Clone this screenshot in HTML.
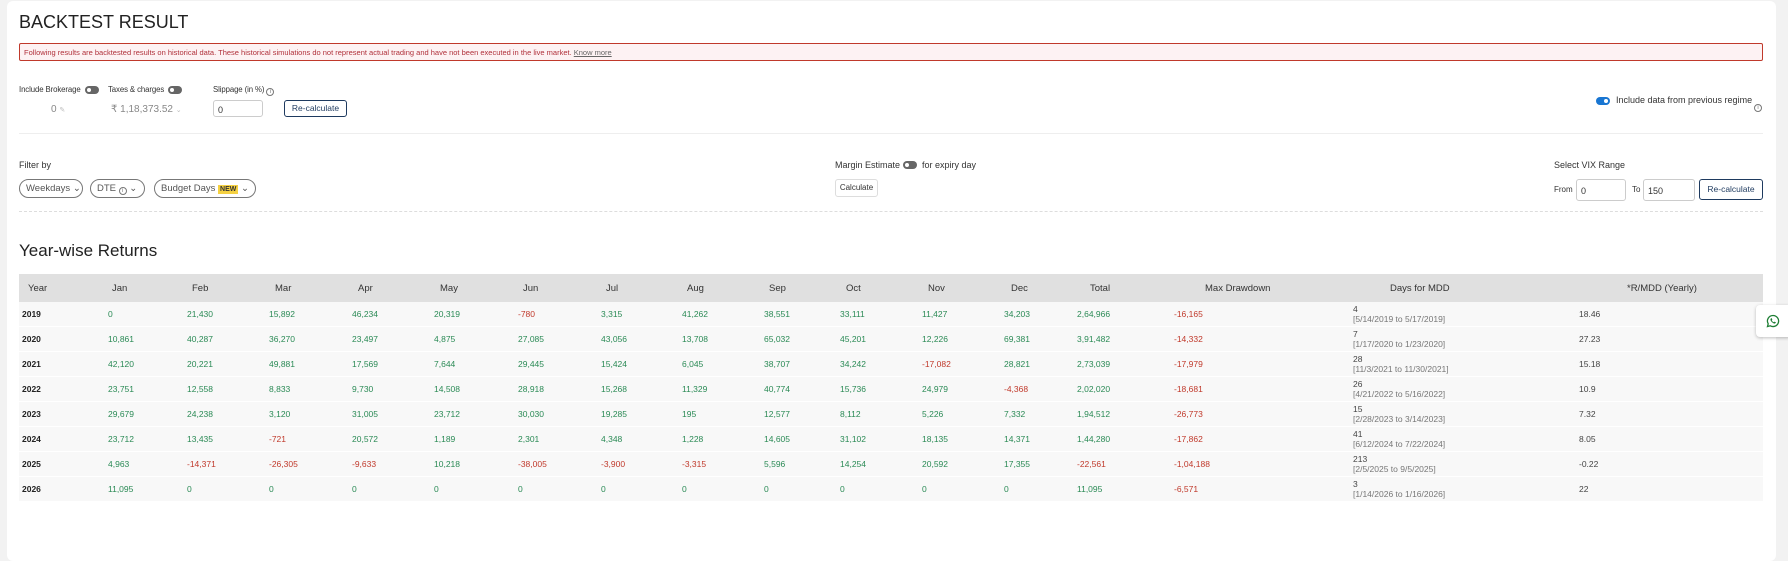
<!DOCTYPE html>
<html><head><meta charset="utf-8">
<style>
*{box-sizing:border-box;margin:0;padding:0}
body{width:1788px;height:536px;background:#f2f2f2;font-family:"Liberation Sans",sans-serif;color:#333;position:relative;overflow:hidden}
.panel{position:absolute;left:7px;top:1px;width:1769px;height:560px;background:#fff;border-radius:6px}
.a{position:absolute;white-space:nowrap}
.tg{position:absolute;width:14px;height:8px;border-radius:4px;background:#666}
.tg::after{content:"";position:absolute;left:2px;top:2px;width:4px;height:4px;border-radius:50%;background:#fff}
.tg.on{background:#1976d2}.tg.on::after{left:8px}
.inp{position:absolute;border:1px solid #ccc;border-radius:3px;font-size:9px;padding:4px 4px;background:#fff}
.btn{position:absolute;border:1px solid #1e3a5f;border-radius:3px;font-size:8.5px;color:#1e3a5f;text-align:center;background:#fff;white-space:nowrap}
.pill{position:absolute;border:1px solid #777;border-radius:10px;font-size:9.5px;color:#555;padding:3px 6px;height:19px;line-height:11px;white-space:nowrap}
.info{display:inline-block;width:8px;height:8px;border:1px solid #777;border-radius:50%;vertical-align:-1px;font-size:6px;line-height:6px;text-align:center;color:#777}
.tbl{position:absolute;left:19px;top:274px;width:1744px}
.row{display:flex;height:25px;font-size:8.5px;align-items:center}
.hd{height:28px;background:#e0e0e0;font-size:9.5px;color:#333}
.bd{background:#f8f8f8;border-bottom:1px solid #fff}
.row>div{flex:none}
.g{color:#2a8a55}.r{color:#c0392b}
.dd{line-height:10px;color:#444}.dd span{color:#777}
.sm{font-size:7.8px;letter-spacing:-0.1px}
</style></head><body>
<div class="panel"></div>
<div class="a" style="left:19px;top:12px;font-size:18px;color:#222">BACKTEST RESULT</div>
<div class="a" style="left:19px;top:43px;width:1744px;height:18px;border:1px solid #c0392b;background:#fdf2f3;border-radius:2px;font-size:7.5px;color:#b0303a;padding:4px 4px">Following results are backtested results on historical data. These historical simulations do not represent actual trading and have not been executed in the live market. <u style="color:#666">Know more</u></div>

<div class="a sm" style="left:19px;top:85px">Include Brokerage</div>
<div class="tg" style="left:85px;top:86px"></div>
<div class="a sm" style="left:108px;top:85px">Taxes &amp; charges</div>
<div class="tg" style="left:168px;top:86px"></div>
<div class="a sm" style="left:213px;top:85px">Slippage (in %) <span class="info">i</span></div>
<div class="a" style="left:51px;top:104px;font-size:10px;color:#888">0 <span style="font-size:7px;color:#bbb">✎</span></div>
<div class="a" style="left:111px;top:104px;font-size:10px;color:#888">₹ 1,18,373.52 <span style="font-size:7px;color:#bbb">⌄</span></div>
<div class="inp" style="left:213px;top:100px;width:50px;height:17px">0</div>
<div class="btn" style="left:284px;top:100px;width:63px;height:17px;line-height:15px">Re-calculate</div>

<div class="tg on" style="left:1596px;top:97px"></div>
<div class="a" style="left:1616px;top:95px;font-size:9px">Include data from previous regime</div>
<div class="a" style="left:1754px;top:95px"><span class="info">i</span></div>

<div class="a" style="left:19px;top:133px;width:1744px;border-top:1px solid #eee"></div>

<div class="a" style="left:19px;top:160px;font-size:9px">Filter by</div>
<div class="pill" style="left:19px;top:179px;width:64px">Weekdays ⌄</div>
<div class="pill" style="left:90px;top:179px;width:55px">DTE <span class="info">i</span> ⌄</div>
<div class="pill" style="left:154px;top:179px;width:102px">Budget Days <span style="background:#f5d142;color:#333;font-size:7px;padding:1px 2px;font-weight:bold">NEW</span> ⌄</div>

<div class="a" style="left:835px;top:160px;font-size:9px">Margin Estimate</div>
<div class="tg" style="left:903px;top:161px"></div>
<div class="a" style="left:922px;top:160px;font-size:9px">for expiry day</div>
<div class="btn" style="left:835px;top:179px;width:43px;height:18px;line-height:16px;border-color:#ddd;color:#333;font-size:8px">Calculate</div>

<div class="a" style="left:1554px;top:160px;font-size:9px">Select VIX Range</div>
<div class="a" style="left:1554px;top:185px;font-size:8px">From</div>
<div class="inp" style="left:1576px;top:179px;width:50px;height:22px;padding-top:6px">0</div>
<div class="a" style="left:1632px;top:185px;font-size:8px">To</div>
<div class="inp" style="left:1643px;top:179px;width:52px;height:22px;padding-top:6px">150</div>
<div class="btn" style="left:1699px;top:179px;width:64px;height:21px;line-height:19px">Re-calculate</div>

<div class="a" style="left:19px;top:211px;width:1744px;border-top:1px dashed #ddd"></div>

<div class="a" style="left:19px;top:241px;font-size:17px;color:#222">Year-wise Returns</div>

<div class="tbl">
<div class="row hd">
<div style="width:89px;padding-left:9px">Year</div><div style="width:79px;padding-left:4px">Jan</div><div style="width:82px;padding-left:5px">Feb</div><div style="width:83px;padding-left:6px">Mar</div><div style="width:82px;padding-left:6px">Apr</div><div style="width:84px;padding-left:6px">May</div><div style="width:83px;padding-left:5px">Jun</div><div style="width:81px;padding-left:5px">Jul</div><div style="width:82px;padding-left:5px">Aug</div><div style="width:76px;padding-left:5px">Sep</div><div style="width:82px;padding-left:6px">Oct</div><div style="width:82px;padding-left:6px">Nov</div><div style="width:73px;padding-left:7px">Dec</div><div style="width:97px;padding-left:13px">Total</div><div style="width:179px;padding-left:31px">Max Drawdown</div><div style="width:226px;padding-left:37px">Days for MDD</div><div style="padding-left:48px">*R/MDD (Yearly)</div>
</div>
</div>
<div id="rows" class="a" style="left:19px;top:302px;width:1744px"></div>

<div class="a" style="left:1756px;top:305px;width:34px;height:32px;background:#fff;border-radius:4px 0 0 4px;box-shadow:0 1px 3px rgba(0,0,0,.25)">
<svg width="14" height="14" viewBox="0 0 24 24" style="position:absolute;left:10px;top:9px"><path d="M12 2.5a9.5 9.5 0 0 0-8.2 14.3L2.5 21.5l4.8-1.3A9.5 9.5 0 1 0 12 2.5z" fill="none" stroke="#1e7e34" stroke-width="2.2"/><path d="M8.5 7.5c.5-.6 1.2-.5 1.5.2l.7 1.6c.2.4 0 .8-.3 1.1l-.5.5c.7 1.4 1.8 2.5 3.2 3.2l.5-.5c.3-.3.7-.4 1.1-.3l1.6.7c.7.3.8 1 .2 1.5-1 1-2.4 1.2-3.8.4a10 10 0 0 1-4.6-4.6c-.8-1.4-.6-2.8.4-3.8z" fill="#1e7e34"/></svg>
</div>

<script>
var W=[89,79,82,83,82,84,83,81,82,76,82,82,73,97,179,226];
var D=[
["2019","0","21,430","15,892","46,234","20,319","-780","3,315","41,262","38,551","33,111","11,427","34,203","2,64,966","-16,165","4","5/14/2019 to 5/17/2019","18.46"],
["2020","10,861","40,287","36,270","23,497","4,875","27,085","43,056","13,708","65,032","45,201","12,226","69,381","3,91,482","-14,332","7","1/17/2020 to 1/23/2020","27.23"],
["2021","42,120","20,221","49,881","17,569","7,644","29,445","15,424","6,045","38,707","34,242","-17,082","28,821","2,73,039","-17,979","28","11/3/2021 to 11/30/2021","15.18"],
["2022","23,751","12,558","8,833","9,730","14,508","28,918","15,268","11,329","40,774","15,736","24,979","-4,368","2,02,020","-18,681","26","4/21/2022 to 5/16/2022","10.9"],
["2023","29,679","24,238","3,120","31,005","23,712","30,030","19,285","195","12,577","8,112","5,226","7,332","1,94,512","-26,773","15","2/28/2023 to 3/14/2023","7.32"],
["2024","23,712","13,435","-721","20,572","1,189","2,301","4,348","1,228","14,605","31,102","18,135","14,371","1,44,280","-17,862","41","6/12/2024 to 7/22/2024","8.05"],
["2025","4,963","-14,371","-26,305","-9,633","10,218","-38,005","-3,900","-3,315","5,596","14,254","20,592","17,355","-22,561","-1,04,188","213","2/5/2025 to 9/5/2025","-0.22"],
["2026","11,095","0","0","0","0","0","0","0","0","0","0","0","11,095","-6,571","3","1/14/2026 to 1/16/2026","22"]];
var h="";
D.forEach(function(r){
 h+='<div class="row bd">';
 h+='<div style="width:89px;padding-left:3px;font-weight:bold;color:#222">'+r[0]+'</div>';
 for(var i=1;i<=14;i++){var v=r[i];h+='<div style="width:'+W[i]+'px" class="'+(v[0]=="-"?"r":"g")+'">'+v+'</div>';}
 h+='<div class="dd" style="width:226px">'+r[15]+'<br><span>['+r[16]+']</span></div>';
 h+='<div style="color:#444">'+r[17]+'</div></div>';
});
document.getElementById("rows").innerHTML=h;
</script>
</body></html>
